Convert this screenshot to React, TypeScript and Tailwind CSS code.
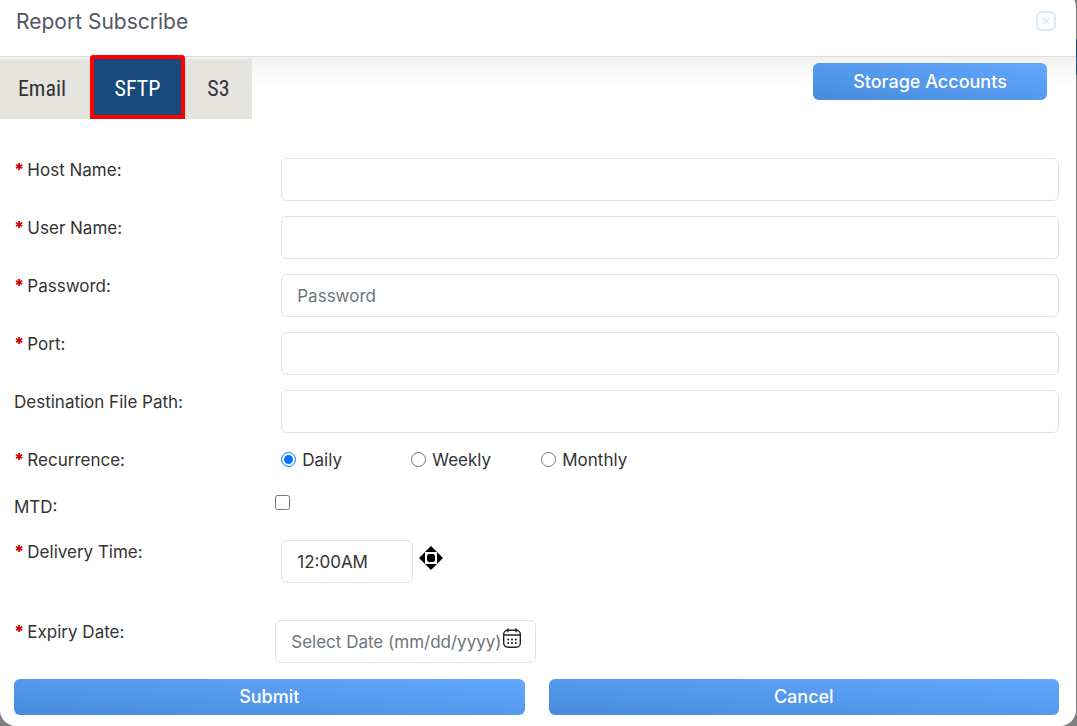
import { useState } from "react";
import type { ReactNode } from "react";

const TABS = [
  { name: "Email", width: "w-[90px] pr-1.5" },
  { name: "SFTP", width: "w-[95px]" },
  { name: "S3", width: "w-[67px]" },
];

const TEXT_FIELDS = [
  { id: "host", label: "Host Name:", type: "text", required: true },
  { id: "user", label: "User Name:", type: "text", required: true },
  { id: "password", label: "Password:", type: "password", required: true, placeholder: "Password" },
  { id: "port", label: "Port:", type: "text", required: true },
  { id: "path", label: "Destination File Path:", type: "text", required: false },
];

const RECURRENCES = ["Daily", "Weekly", "Monthly"];

const inputClass =
  "h-[43px] rounded-md border border-[#dee2e6] bg-white px-[15px] text-[#333] placeholder:text-[#6c757d] outline-none";

const buttonClass =
  "rounded-md bg-linear-to-tr from-[#488bdb] to-[#62a8ff] text-lg font-medium leading-6 text-white";

export default function App() {
  return (
    <div className="relative min-h-screen bg-[#7f7f7f] font-['Inter',sans-serif] text-[17px] leading-6 text-[#333]">
      {/* Sliver of the page behind the dialog */}
      <div className="absolute right-0 top-[39px] h-9 w-px bg-[#184a7b]" />

      <section className="relative mr-px min-h-screen rounded-b-2xl bg-white pb-[11px] [border-top-right-radius:2px_10px]">
        <header className="flex h-[57px] items-start justify-between border-b border-[#dcdce4] pl-4 pr-5 pt-2">
          <h1 className="text-[21px] leading-7 text-[#555566]">Report Subscribe</h1>
          <button aria-label="Close" className="mt-[3px]">
            <CloseIcon />
          </button>
        </header>

        <div className="flex h-[62px] items-start justify-between bg-linear-to-b from-[#f2f2f3] to-white to-50% pr-[29px]">
          <Tabs />
          <button className={`${buttonClass} mt-1.5 h-[37px] w-[234px]`}>Storage Accounts</button>
        </div>

        <SftpForm />
      </section>
    </div>
  );
}

function Tabs() {
  const [active, setActive] = useState("SFTP");

  return (
    <nav className="mt-0.5 flex h-[60px] bg-[#e5e4df] font-['Roboto_Condensed',sans-serif] text-[22px]">
      {TABS.map(({ name, width }) => (
        <button
          key={name}
          onClick={() => setActive(name)}
          className={`${width} relative ${name === active ? "bg-[#184a7b] text-white" : "text-[#333]"}`}
        >
          {name}
          {name === active && (
            <span className="absolute inset-x-0 -top-1 bottom-0 rounded-[3px] border-4 border-[#ff0000]" />
          )}
        </button>
      ))}
    </nav>
  );
}

function SftpForm() {
  const [recurrence, setRecurrence] = useState("Daily");

  return (
    <form className="pl-3.5 pr-[17px] pt-[39px]" onSubmit={(e) => e.preventDefault()}>
      <div className="flex flex-col gap-[15px]">
        {TEXT_FIELDS.map((field) => (
          <Row key={field.id} id={field.id} label={field.label} required={field.required}>
            <div className="pl-1.5">
              <input
                id={field.id}
                type={field.type}
                placeholder={field.placeholder}
                className={`${inputClass} w-full`}
              />
            </div>
          </Row>
        ))}

        <div role="radiogroup" aria-labelledby="recurrence" className="grid h-8 grid-cols-[1fr_3fr]">
          <span id="recurrence">
            <Required />
            Recurrence:
          </span>
          <div className="flex pl-1.5">
            {RECURRENCES.map((name) => (
              <label key={name} className="flex w-[130px] items-start gap-1.5">
                <input
                  type="radio"
                  name="recurrence"
                  checked={recurrence === name}
                  onChange={() => setRecurrence(name)}
                  className="mt-1 size-[15px]"
                />
                {name}
              </label>
            ))}
          </div>
        </div>

        <Row id="mtd" label="MTD:">
          <div className="h-[30px]">
            <input id="mtd" type="checkbox" className="block size-[15px]" />
          </div>
        </Row>

        <Row id="time" label="Delivery Time:" required>
          <div className="flex h-[65px] items-start gap-1.5 pl-1.5">
            <input id="time" type="text" defaultValue="12:00AM" className={`${inputClass} w-[132px]`} />
            <button type="button" aria-label="Choose time" className="mt-1.5">
              <TimeIcon />
            </button>
          </div>
        </Row>

        <Row id="expiry" label="Expiry Date:" required>
          <div className="relative w-[261px]">
            <input
              id="expiry"
              type="text"
              placeholder="Select Date (mm/dd/yyyy)"
              className={`${inputClass} w-full`}
            />
            <button type="button" aria-label="Open calendar" className="absolute right-3.5 top-2">
              <CalendarIcon />
            </button>
          </div>
        </Row>
      </div>

      <div className="mt-4 grid grid-cols-2 gap-6">
        <button type="submit" className={`${buttonClass} h-9`}>Submit</button>
        <button type="button" className={`${buttonClass} h-9`}>Cancel</button>
      </div>
    </form>
  );
}

type RowProps = { id: string; label: string; required?: boolean; children: ReactNode };

function Row({ id, label, required, children }: RowProps) {
  return (
    <div className="grid grid-cols-[1fr_3fr] items-start">
      <label htmlFor={id}>
        {required && <Required />}
        {label}
      </label>
      {children}
    </div>
  );
}

function Required() {
  return <span className="mr-[3px] font-black text-[#d40000]">*</span>;
}

function CloseIcon() {
  return (
    <svg width="20" height="20" viewBox="0 0 20 20" fill="none" stroke="#dbeafe" strokeWidth="2" aria-hidden="true">
      <rect x="1" y="1" width="18" height="18" rx="5" />
      <path d="M7 7l6 6M13 7l-6 6" />
    </svg>
  );
}

function TimeIcon() {
  return (
    <svg width="24" height="24" viewBox="0 0 24 24" aria-hidden="true">
      <path d="M12 0l12 12-12 12L0 12z" fill="#000" />
      <rect x="6" y="6" width="12" height="12" fill="#fff" />
      <rect x="8" y="8" width="8" height="8" rx="2.5" fill="#000" />
    </svg>
  );
}

function CalendarIcon() {
  return (
    <svg width="20" height="20" viewBox="0 0 20 20" fill="none" stroke="#222" strokeWidth="1.4" strokeLinecap="round" aria-hidden="true">
      <rect x="1.7" y="2.2" width="16.6" height="17" rx="4" />
      <path d="M1.7 7h16.6M6 .8v3M14 .8v3" />
      <path d="M6.2 11.5h.01M10 11.5h.01M13.8 11.5h.01M6.2 15h.01M10 15h.01M13.8 15h.01" strokeWidth="2" />
    </svg>
  );
}
